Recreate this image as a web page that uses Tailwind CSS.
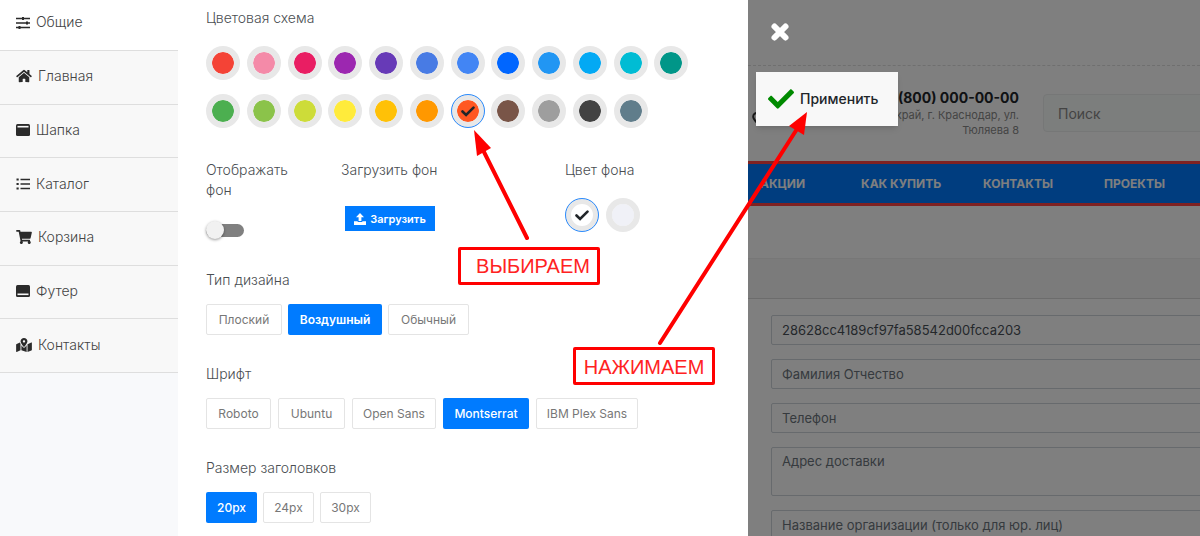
<!DOCTYPE html>
<html lang="ru">
<head>
    <meta charset="UTF-8">
    <meta name="viewport" content="width=device-width, initial-scale=1.0">
    <title>Настройки темы</title>
    <script src="https://cdn.jsdelivr.net/npm/@tailwindcss/browser@4"></script>
</head>
<body class="relative flex h-screen overflow-hidden bg-white font-['Inter',sans-serif] text-[13px] text-[#4a4e52]">

    <!-- sections menu -->
    <aside class="w-[178px] shrink-0 bg-[#f8f9fb] text-sm font-light leading-5 text-[#444]">
        <a href="#common" class="flex h-[51px] gap-1.5 border-b border-[#dedede] bg-white pl-4 pt-3">
            <svg class="mt-1 h-3.5 w-3.5" viewBox="0 0 14 14" fill="none" stroke="#2b2b2b" stroke-width="1.5"><path d="M0 2.5h14M0 7h14M0 11.5h14"/><path d="M7 1v3M11 5.500v3M3.500 10v3" stroke-width="2"/></svg>
            Общие
        </a>
        <nav class="grid h-[322px] grid-rows-6">
            <a href="#main" class="flex items-center gap-1.5 border-b border-[#dedede] bg-[#f8f8f8] pl-4 pb-0.5">
                <svg class="h-3.5 w-4" viewBox="0 0 576 512" fill="#2b2b2b"><path d="M280.370 148.260L96 300.110V464a16 16 0 0 0 16 16l112.060-.29a16 16 0 0 0 15.920-16V368a16 16 0 0 1 16-16h64a16 16 0 0 1 16 16v95.640a16 16 0 0 0 16 16.050L464 480a16 16 0 0 0 16-16V300L295.670 148.260a12.190 12.190 0 0 0-15.300 0zM571.600 251.470L488 182.560V44.050a12 12 0 0 0-12-12h-56a12 12 0 0 0-12 12v72.610L318.470 43a48 48 0 0 0-61 0L4.340 251.470a12 12 0 0 0-1.600 16.900l25.500 31A12 12 0 0 0 45.150 301l235.220-193.740a12.190 12.190 0 0 1 15.300 0L530.900 301a12 12 0 0 0 16.900-1.600l25.500-31a12 12 0 0 0-1.700-16.930z"/></svg>
                Главная
            </a>
            <a href="#header" class="flex items-center gap-1.5 border-b border-[#dedede] bg-[#f8f8f8] pl-4 pb-0.5">
                <svg class="h-3.5 w-3.5" viewBox="0 0 14 14"><rect y="1" width="14" height="12" rx="1.500" fill="#2b2b2b"/><path d="M1.500 3.700h11" stroke="#f8f8f8" stroke-width="1.600"/></svg>
                Шапка
            </a>
            <a href="#catalog" class="flex items-center gap-1.5 border-b border-[#dedede] bg-[#f8f8f8] pl-4 pb-0.5">
                <svg class="h-3.5 w-3.5" viewBox="0 0 14 14" stroke="#2b2b2b" stroke-width="1.700"><path d="M4.500 2.500H14M4.500 7H14M4.500 11.500H14"/><path d="M.5 2.500h2.200M.5 7h2.200M.5 11.500h2.200" stroke-width="2.200"/></svg>
                Каталог
            </a>
            <a href="#cart" class="flex items-center gap-1.5 border-b border-[#dedede] bg-[#f8f8f8] pl-4 pb-0.5">
                <svg class="h-3.5 w-4" viewBox="0 0 576 512" fill="#2b2b2b"><path d="M528.120 301.319l47.273-208C578.806 78.301 567.391 64 551.990 64H159.208l-9.166-44.810C147.758 8.021 137.930 0 126.529 0H24C10.745 0 0 10.745 0 24v16c0 13.255 10.745 24 24 24h69.883l70.248 343.435C147.325 417.100 136 435.222 136 456c0 30.928 25.072 56 56 56s56-25.072 56-56c0-15.674-6.447-29.835-16.824-40h209.647C430.447 426.165 424 440.326 424 456c0 30.928 25.072 56 56 56s56-25.072 56-56c0-22.172-12.888-41.332-31.579-50.405l5.517-24.276c3.413-15.018-8.002-29.319-23.403-29.319H218.117l-6.545-32h293.145c11.206 0 20.920-7.754 23.403-18.681z"/></svg>
                Корзина
            </a>
            <a href="#footer" class="flex items-center gap-1.5 border-b border-[#dedede] bg-[#f8f8f8] pl-4 pb-0.5">
                <svg class="h-3.5 w-3.5" viewBox="0 0 14 14"><rect y="1" width="14" height="12" rx="1.500" fill="#2b2b2b"/><path d="M1.500 10.300h11" stroke="#f8f8f8" stroke-width="1.600"/></svg>
                Футер
            </a>
            <a href="#contacts" class="flex items-center gap-1.5 border-b border-[#dedede] bg-[#f8f8f8] pl-4 pb-0.5">
                <svg class="h-3.5 w-4" viewBox="0 0 576 512" fill="#2b2b2b"><path d="M288 0c-69.590 0-126 56.410-126 126 0 56.260 82.350 158.800 113.900 196.020 6.390 7.540 17.820 7.540 24.200 0C331.650 284.800 414 182.260 414 126 414 56.410 357.590 0 288 0zm0 168c-23.200 0-42-18.800-42-42s18.800-42 42-42 42 18.800 42 42-18.800 42-42 42zM20.120 215.950A32.006 32.006 0 0 0 0 245.660v250.320c0 11.320 11.430 19.060 21.940 14.860L160 448V214.920c-8.840-15.980-16.070-31.540-21.250-46.420L20.120 215.950zM288 359.670c-14.070 0-27.380-6.180-36.510-16.960-19.660-23.200-40.570-49.620-59.490-76.720v182l192 64V266c-18.920 27.090-39.820 53.520-59.490 76.720-9.130 10.770-22.440 16.950-36.510 16.950zm266.060-198.510L416 224v288l139.880-55.950A31.996 31.996 0 0 0 576 426.340V176.020c0-11.320-11.430-19.060-21.940-14.860z"/></svg>
                Контакты
            </a>
        </nav>
    </aside>

    <!-- settings -->
    <main class="w-[570px] shrink-0 pl-7 pt-2 text-sm font-light leading-5">
        <h2 class="font-light">Цветовая схема</h2>
        <div class="mt-[18px] grid w-[489px] grid-cols-12 gap-y-3.5">
            <input type="radio" name="color" aria-label="Красный" class="h-[34px] w-[34px] appearance-none rounded-full border-6 border-[#e8e8e8] bg-[#f44336] bg-clip-padding">
            <input type="radio" name="color" aria-label="Светло-розовый" class="h-[34px] w-[34px] appearance-none rounded-full border-6 border-[#e8e8e8] bg-[#f48aa8] bg-clip-padding">
            <input type="radio" name="color" aria-label="Розовый" class="h-[34px] w-[34px] appearance-none rounded-full border-6 border-[#e8e8e8] bg-[#e91e63] bg-clip-padding">
            <input type="radio" name="color" aria-label="Пурпурный" class="h-[34px] w-[34px] appearance-none rounded-full border-6 border-[#e8e8e8] bg-[#9c27b0] bg-clip-padding">
            <input type="radio" name="color" aria-label="Фиолетовый" class="h-[34px] w-[34px] appearance-none rounded-full border-6 border-[#e8e8e8] bg-[#673ab7] bg-clip-padding">
            <input type="radio" name="color" aria-label="Васильковый" class="h-[34px] w-[34px] appearance-none rounded-full border-6 border-[#e8e8e8] bg-[#487be4] bg-clip-padding">
            <input type="radio" name="color" aria-label="Светло-синий" class="h-[34px] w-[34px] appearance-none rounded-full border-6 border-[#e8e8e8] bg-[#4285f4] bg-clip-padding">
            <input type="radio" name="color" aria-label="Синий" class="h-[34px] w-[34px] appearance-none rounded-full border-6 border-[#e8e8e8] bg-[#0066ff] bg-clip-padding">
            <input type="radio" name="color" aria-label="Голубой" class="h-[34px] w-[34px] appearance-none rounded-full border-6 border-[#e8e8e8] bg-[#2196f3] bg-clip-padding">
            <input type="radio" name="color" aria-label="Небесный" class="h-[34px] w-[34px] appearance-none rounded-full border-6 border-[#e8e8e8] bg-[#03a9f4] bg-clip-padding">
            <input type="radio" name="color" aria-label="Бирюзовый" class="h-[34px] w-[34px] appearance-none rounded-full border-6 border-[#e8e8e8] bg-[#00bcd4] bg-clip-padding">
            <input type="radio" name="color" aria-label="Изумрудный" class="h-[34px] w-[34px] appearance-none rounded-full border-6 border-[#e8e8e8] bg-[#009688] bg-clip-padding">
            <input type="radio" name="color" aria-label="Зелёный" class="h-[34px] w-[34px] appearance-none rounded-full border-6 border-[#e8e8e8] bg-[#4caf50] bg-clip-padding">
            <input type="radio" name="color" aria-label="Салатовый" class="h-[34px] w-[34px] appearance-none rounded-full border-6 border-[#e8e8e8] bg-[#8bc34a] bg-clip-padding">
            <input type="radio" name="color" aria-label="Лаймовый" class="h-[34px] w-[34px] appearance-none rounded-full border-6 border-[#e8e8e8] bg-[#cddc39] bg-clip-padding">
            <input type="radio" name="color" aria-label="Жёлтый" class="h-[34px] w-[34px] appearance-none rounded-full border-6 border-[#e8e8e8] bg-[#ffeb3b] bg-clip-padding">
            <input type="radio" name="color" aria-label="Янтарный" class="h-[34px] w-[34px] appearance-none rounded-full border-6 border-[#e8e8e8] bg-[#ffc107] bg-clip-padding">
            <input type="radio" name="color" aria-label="Оранжевый" class="h-[34px] w-[34px] appearance-none rounded-full border-6 border-[#e8e8e8] bg-[#ff9800] bg-clip-padding">
            <label class="relative h-[34px] w-[34px]">
                <input type="radio" name="color" aria-label="Огненный" checked class="block h-[34px] w-[34px] appearance-none rounded-full border-6 border-[#e8e8e8] bg-[#ff5722] bg-clip-padding outline-1 -outline-offset-1 outline-[#2b8cff]">
                <svg class="absolute inset-0 m-auto h-3.5 w-3.5" viewBox="0 0 14 14" fill="none" stroke="#212529" stroke-width="2.600" stroke-linecap="round"><path d="M1.500 7.500l3.600 3.500L12.500 3.600"/></svg>
            </label>
            <input type="radio" name="color" aria-label="Коричневый" class="h-[34px] w-[34px] appearance-none rounded-full border-6 border-[#e8e8e8] bg-[#795548] bg-clip-padding">
            <input type="radio" name="color" aria-label="Серый" class="h-[34px] w-[34px] appearance-none rounded-full border-6 border-[#e8e8e8] bg-[#9e9e9e] bg-clip-padding">
            <input type="radio" name="color" aria-label="Тёмный" class="h-[34px] w-[34px] appearance-none rounded-full border-6 border-[#e8e8e8] bg-[#424242] bg-clip-padding">
            <input type="radio" name="color" aria-label="Серо-синий" class="h-[34px] w-[34px] appearance-none rounded-full border-6 border-[#e8e8e8] bg-[#607d8b] bg-clip-padding">
        </div>

        <div class="mt-8 grid h-[110px] grid-cols-[135px_224px_1fr]">
            <div>
                <label for="show-bg" class="block w-24">Отображать фон</label>
                <div class="relative mt-5 flex h-5 w-[38px] items-center">
                    <input id="show-bg" type="checkbox" class="h-[13px] w-full appearance-none rounded-full bg-[#808080]">
                    <span class="pointer-events-none absolute left-0 h-[18px] w-[18px] rounded-full bg-[#f1f1f1] shadow-[0_1px_3px_#0006]"></span>
                </div>
            </div>
            <div>
                <h2 class="font-light">Загрузить фон</h2>
                <button class="ml-1 mt-[26px] flex h-[25px] w-[90px] items-center justify-center gap-1 bg-[#007bff] text-[11px] font-semibold text-white">
                    <svg class="h-3 w-3" viewBox="0 0 12 12" fill="#fff"><path d="M6 0l4 4.200H7.400V8H4.600V4.200H2z"/><path d="M0 8.200h3.700V9h4.600v-.8H12V12H0z"/></svg>
                    Загрузить
                </button>
            </div>
            <div>
                <h2 class="font-light">Цвет фона</h2>
                <div class="mt-[18px] flex gap-[7px]">
                    <label class="relative h-[34px] w-[34px]">
                        <input type="radio" name="bg" aria-label="Белый" checked class="block h-[34px] w-[34px] appearance-none rounded-full border-6 border-[#e8e8e8] bg-white bg-clip-padding outline-1 -outline-offset-1 outline-[#2b8cff]">
                        <svg class="absolute inset-0 m-auto h-3.5 w-3.5" viewBox="0 0 14 14" fill="none" stroke="#212529" stroke-width="2.600" stroke-linecap="round"><path d="M1.500 7.500l3.600 3.500L12.500 3.600"/></svg>
                    </label>
                    <input type="radio" name="bg" aria-label="Светло-серый" class="h-[34px] w-[34px] appearance-none rounded-full border-6 border-[#e8e8e8] bg-[#f0f1f7] bg-clip-padding">
                </div>
            </div>
        </div>

        <h2 class="font-light">Тип дизайна</h2>
        <div class="mt-3.5 flex gap-1.5 text-xs font-normal text-[#777]">
            <button class="h-[31px] w-[76px] rounded-xs border border-[#e4e4e4]">Плоский</button>
            <button class="h-[31px] w-[94px] rounded-xs bg-[#007bff] font-semibold text-white">Воздушный</button>
            <button class="h-[31px] w-[81px] rounded-xs border border-[#e4e4e4]">Обычный</button>
        </div>

        <h2 class="mt-[29px] font-light">Шрифт</h2>
        <div class="mt-3.5 flex gap-[7px] text-xs font-normal text-[#777]">
            <button class="h-[31px] w-[65px] rounded-xs border border-[#e4e4e4]">Roboto</button>
            <button class="h-[31px] w-[67px] rounded-xs border border-[#e4e4e4]">Ubuntu</button>
            <button class="h-[31px] w-[84px] rounded-xs border border-[#e4e4e4]">Open Sans</button>
            <button class="h-[31px] w-[86px] rounded-xs bg-[#007bff] font-medium text-white">Montserrat</button>
            <button class="h-[31px] w-[102px] rounded-xs border border-[#e4e4e4]">IBM Plex Sans</button>
        </div>

        <h2 class="mt-[29px] font-light">Размер заголовков</h2>
        <div class="mt-3.5 flex gap-1.5 text-xs font-normal text-[#777]">
            <button class="h-[31px] w-[51px] rounded-xs bg-[#007bff] font-medium text-white">20px</button>
            <button class="h-[31px] w-[51px] rounded-xs border border-[#e4e4e4]">24px</button>
            <button class="h-[31px] w-[51px] rounded-xs border border-[#e4e4e4]">30px</button>
        </div>
    </main>

    <!-- site behind the panel -->
    <section class="relative min-w-0 flex-1 overflow-hidden bg-white">
        <div class="h-[66px] border-b border-dashed border-[#dedede]"></div>
        <header class="flex h-[95px] gap-6 pt-[22px]">
            <div class="flex w-[271px] justify-between text-right">
                <svg class="ml-1 mt-6 h-3 w-2.5 shrink-0" viewBox="0 0 10 12" fill="none" stroke="#333" stroke-width="2"><path d="M5 11C2.500 8 1.200 6.500 1.200 4.700a3.800 3.800 0 0 1 7.600 0C8.800 6.500 7.500 8 5 11z"/></svg>
                <div class="w-[170px]">
                    <p class="text-sm leading-5 font-bold text-[#212529]">8 (800) 000-00-00</p>
                    <p class="text-[11px] leading-[15px] text-[#888]">край, г. Краснодар, ул.<br>Тюляева 8</p>
                </div>
            </div>
            <input type="text" placeholder="Поиск" aria-label="Поиск" class="mt-1.5 -mr-4 h-[38px] min-w-0 flex-1 rounded-sm border border-[#eceeee] bg-[#f9fcfa] px-3.5 text-sm placeholder:text-[#888]">
        </header>
        <nav class="flex h-[45px] items-center gap-[30px] border-y-3 border-[#ff4444] bg-[#007bff] pl-3 text-xs font-bold whitespace-nowrap text-white">
            <a href="#sale" class="w-[71px]">АКЦИИ</a>
            <a href="#buy" class="w-[92px]">КАК КУПИТЬ</a>
            <a href="#contact" class="w-[91px]">КОНТАКТЫ</a>
            <a href="#projects">ПРОЕКТЫ</a>
        </nav>
        <div class="h-[52px]"></div>
        <div class="h-[41px] border-t border-b border-t-[#eee] border-b-[#d8d8d8] bg-[#f7f7f7]"></div>
        <form class="-mr-4 flex flex-col gap-3.5 pl-[23px] pt-4 text-[13px] text-[#495057]">
            <input type="text" value="28628cc4189cf97fa58542d00fcca203" aria-label="Имя" class="h-[30px] rounded-xs border border-[#ced4da] px-2.5">
            <input type="text" placeholder="Фамилия Отчество" aria-label="Фамилия Отчество" class="h-[30px] rounded-xs border border-[#ced4da] px-2.5 placeholder:text-[#6c757d]">
            <input type="text" placeholder="Телефон" aria-label="Телефон" class="h-[30px] rounded-xs border border-[#ced4da] px-2.5 placeholder:text-[#6c757d]">
            <textarea placeholder="Адрес доставки" aria-label="Адрес доставки" class="h-[49px] resize-none rounded-xs border border-[#ced4da] px-2.5 py-1 placeholder:text-[#6c757d]"></textarea>
            <input type="text" placeholder="Название организации (только для юр. лиц)" aria-label="Название организации" class="h-[30px] rounded-xs border border-[#ced4da] px-2.5 placeholder:text-[#6c757d]">
        </form>

        <div class="absolute inset-0 bg-black/50"></div>
        <button aria-label="Закрыть" class="absolute left-[22px] top-[22px]">
            <svg class="h-5 w-5" viewBox="0 0 20 20" stroke="#fff" stroke-width="6" stroke-linecap="round"><path d="M4.500 4.500l11 11M15.500 4.500l-11 11"/></svg>
        </button>
        <button class="absolute left-2 top-[72px] flex h-[54px] w-[142px] items-center gap-1.5 bg-[#f8f8f8] pl-3 text-sm font-medium text-[#212529] shadow-md">
            <svg class="h-[26px] w-[26px] shrink-0" viewBox="0 0 512 512" fill="#008a00"><path d="M173.898 439.404l-166.400-166.400c-9.997-9.997-9.997-26.206 0-36.204l36.203-36.204c9.997-9.998 26.207-9.998 36.204 0L192 312.690 432.095 72.596c9.997-9.997 26.207-9.997 36.204 0l36.203 36.204c9.997 9.997 9.997 26.206 0 36.204l-294.400 294.401c-9.998 9.997-26.207 9.997-36.204-.001z"/></svg>
            Применить
        </button>
    </section>

    <!-- hints -->
    <svg class="pointer-events-none absolute left-0 top-0 h-[536px] w-[1200px]" viewBox="0 0 1200 536" fill="red" stroke="red" stroke-linecap="round">
        <path d="M527 238L482 148" stroke-width="4"/>
        <path d="M474 130l17 18-14 8z" stroke="none"/>
        <path d="M660 343L797 129" stroke-width="4"/>
        <path d="M807 112l-3 23-15-9z" stroke="none"/>
    </svg>
    <div class="absolute left-[458px] top-[247px] flex h-[38px] w-[142px] items-center justify-center rounded-xs border-[3px] border-[red] pl-2 font-['Liberation_Sans',sans-serif] text-xl text-[#f22]">ВЫБИРАЕМ</div>
    <div class="absolute left-[573px] top-[347px] flex h-[38px] w-[142px] items-center justify-center rounded-xs border-[3px] border-[red] pt-0.5 font-['Liberation_Sans',sans-serif] text-xl text-[#f22]">НАЖИМАЕМ</div>
</body>
</html>
